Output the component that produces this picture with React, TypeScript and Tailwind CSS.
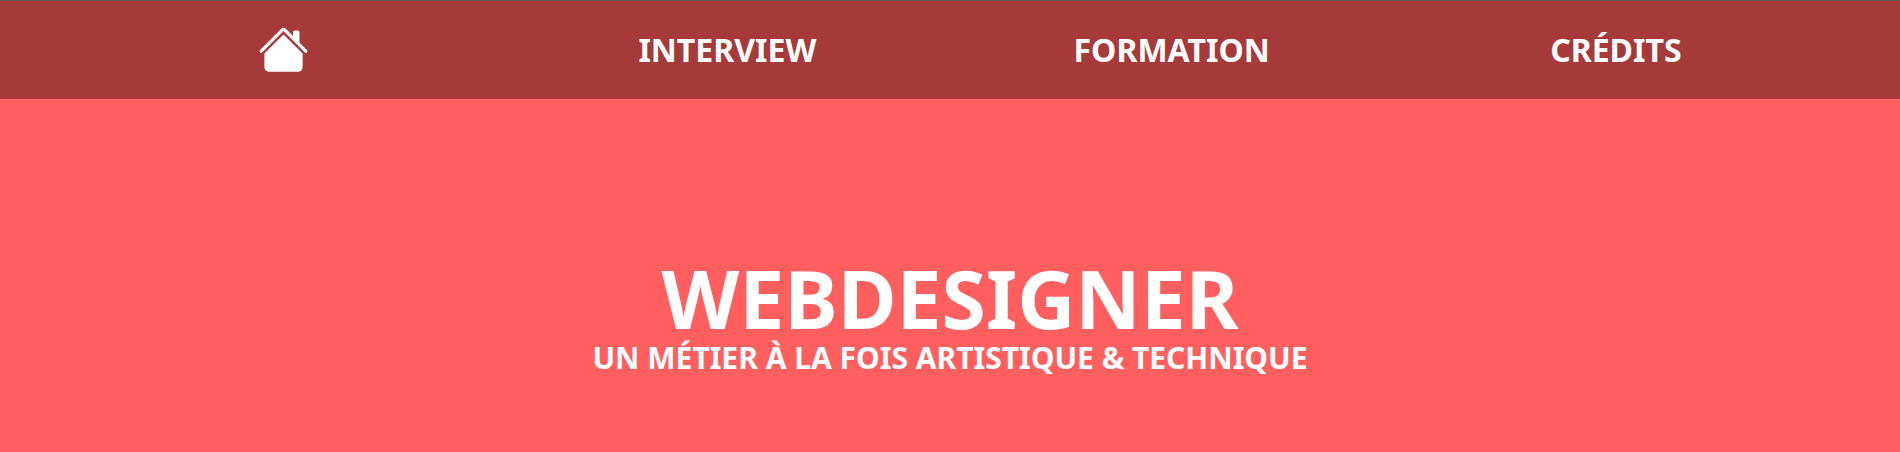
export default function App() {
  return (
    <div className="h-[452px] w-full overflow-hidden bg-[#ff5f5f] font-['Noto_Sans',sans-serif] font-bold text-white">
      <nav className="grid h-[100px] grid-cols-4 items-center border-t border-b border-t-[#5a5a5a] border-b-[#ff7272] bg-[#a63a3a] pl-[61px] pr-[62px] text-[32px] leading-none">
        <div className="mb-[2px] flex justify-center">
          <svg width="51" height="51" viewBox="0 0 16 16" fill="#fff" aria-label="Accueil">
            <path d="M8.707 1.5a1 1 0 0 0-1.414 0L.646 8.146a.5.5 0 0 0 .708.708L8 2.207l6.646 6.647a.5.5 0 0 0 .708-.708L13 5.793V2.5a.5.5 0 0 0-.5-.5h-1a.5.5 0 0 0-.5.5v1.293L8.707 1.5Z" />
            <path d="m8 3.293 6 6V13.5a1.5 1.5 0 0 1-1.5 1.5h-9A1.5 1.5 0 0 1 2 13.5V9.293l6-6Z" />
          </svg>
        </div>
        <div className="text-center">INTERVIEW</div>
        <div className="text-center">FORMATION</div>
        <div className="text-center">CRÉDITS</div>
      </nav>
      <header className="flex flex-col items-center pt-[159px] text-center">
        <h1 className="text-[80.4px] leading-[79px]">WEBDESIGNER</h1>
        <p className="text-[30px] leading-[40px]">UN MÉTIER À LA FOIS ARTISTIQUE &amp; TECHNIQUE</p>
      </header>
    </div>
  );
}
